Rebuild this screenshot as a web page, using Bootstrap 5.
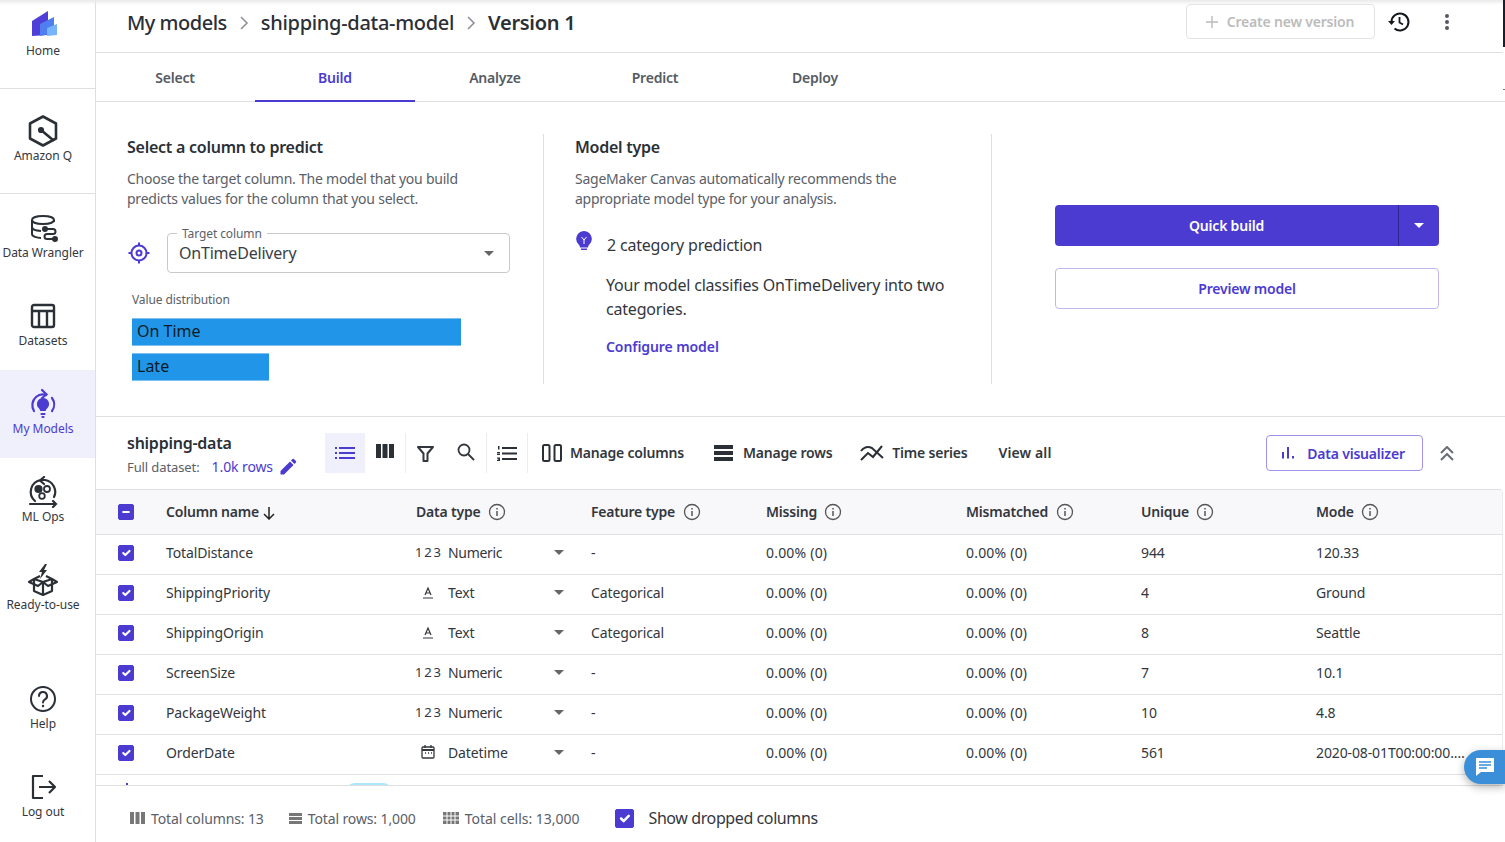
<!DOCTYPE html>
<html lang="en">
<head>
<meta charset="utf-8">
<title>Build</title>
<link href="https://cdn.jsdelivr.net/npm/bootstrap@5.3.0/dist/css/bootstrap.min.css" rel="stylesheet">
<style>
:root{--pur:#4b3bd1;--ink:#2b2f36;--gr:#5a6068;--ln:#dfdfdf}
html,body{height:842px;overflow:hidden}
body{font-family:"Noto Sans","Liberation Sans",sans-serif;color:var(--ink);background:#fff;font-size:14px}
.shell{height:842px;width:1505px;position:relative;overflow:hidden}
.topshade{position:absolute;left:0;top:0;right:0;height:5px;background:linear-gradient(#e9e9e9,#fff0);z-index:2}
.edgebar{position:absolute;right:0;top:0;width:2px;height:47px;background:#16202c;z-index:3}
.edgetick{position:absolute;right:0;top:89px;width:2px;height:1px;background:#777;z-index:3}
.rail{width:96px;flex:none;border-right:1px solid var(--ln);height:842px}
.rail-item{height:88px;padding:18px 9px 0 0;font-size:12px;line-height:16px;color:#33373d;white-space:nowrap;letter-spacing:-.05px}
.rail-item svg{width:32px;height:32px;display:block;margin-bottom:0}
.rail-item span{display:block;margin-top:1px}
.ri-home{height:89px;padding-top:10px;border-bottom:1px solid var(--ln)}
.ri-home svg{height:28px;margin-bottom:4px}
.ri-q{height:105px;padding-top:26px;border-bottom:1px solid var(--ln)}
.ri-low{padding-top:17px}
.ri-act{background:#f0effc;color:var(--pur)}
.crumbs{height:53px;border-bottom:1px solid var(--ln);padding:0 54px 0 31px;margin-right:2px;flex:none}
.crumbs .cr{font-size:20px;font-weight:500;line-height:24px;letter-spacing:-.3px;margin-top:-6px}
.crumbs .cr-a{letter-spacing:-.5px}
.crumbs .cr-b{font-weight:600}
.crumbs svg.sep{margin:-6px 12px 0}
.newver{width:189px;height:35px;border:1px solid #e3e3e3;border-radius:4px;color:#bcbcbc;font-weight:600;font-size:14px;margin-top:-9px;background:#fff;padding:0 2px 0 0;letter-spacing:-.2px}
.hist{margin:-8px 0 0 12px;flex:none}
.kebab{margin:-8px 0 0 34px;flex:none}
.tabrow{height:49px;border-bottom:1px solid var(--ln);flex:none;margin-left:-1px}
.tabi{width:160px;text-align:center;line-height:50px;height:49px;font-weight:600;color:#555b63;font-size:14px;letter-spacing:-.2px}
.tabi-on{color:var(--pur);border-bottom:2px solid var(--pur)}
.panel{height:315px;border-bottom:1px solid var(--ln);padding:32px 0;flex:none;margin-left:-1px}
.pcol{width:448px;padding:0 32px 0 31px;height:250px;flex:none;border-right:1px solid var(--ln)}
.pcol-first{width:449px;padding:0 33px 0 32px}
.pcol-last{border-right:0;padding:71px 0 0 63px;width:448px}
.ptitle{font-size:16px;font-weight:600;line-height:26px;margin:0 0 9px;letter-spacing:-.25px}
.pdesc{font-size:14px;line-height:20px;color:var(--gr);margin:0;letter-spacing:-.24px}
.tgt{height:40px;border:1px solid #c9c9c9;border-radius:4px;width:344px;padding:0 15px 0 11px;font-size:16px;position:relative;letter-spacing:-.2px;color:#3a3e44}
.tgt-lbl{position:absolute;left:9px;top:-7px;background:#fff;font-size:12px;line-height:14px;padding:0 5px;color:var(--gr);letter-spacing:-.1px}
.vd{font-size:12px;line-height:16px;color:var(--gr);margin:19px 0 10px 5px;letter-spacing:-.1px}
.dbar{height:28px;background:#2196e8;border-top:1px solid #7cc1f0;border-bottom:1px solid #7cc1f0;margin:0 0 7px 5px;padding-left:5px;font-size:16px;line-height:25px;color:#0c1a28}
.tx16{font-size:16px;line-height:24px;color:#33373d;letter-spacing:-.2px}
.cfg{color:var(--pur);font-weight:600;font-size:14px;letter-spacing:-.08px}
.qb{width:384px;height:41px;background:var(--pur);border-radius:4px;color:#fff;font-weight:600;font-size:14px;letter-spacing:-.2px}
.qb-m{flex:1;text-align:center;line-height:41px;border-right:1px solid #2f2492}
.qb-c{width:40px}
.pv{width:384px;height:41px;border:1px solid #bdb8ee;border-radius:4px;color:var(--pur);font-weight:600;background:#fff;margin-top:22px;padding:0;font-size:14px;letter-spacing:-.2px}
.tools{height:72px;padding:16px 0 0 31px;flex:none;position:relative}
.dsn{width:198px;flex:none;margin-top:-1px}
.dsn b{display:block;font-size:16px;font-weight:600;line-height:22px;letter-spacing:-.25px}
.dsn div{font-size:13px;color:var(--gr);line-height:20px;margin-top:3px;letter-spacing:-.1px}
.dsn a{color:var(--pur);text-decoration:none;font-size:14px;margin-left:12px}
.tbox{width:40px;height:40px;flex:none}
.tbox-on{background:#f0effc}
.vsep{width:1px;height:40px;background:#ececec;flex:none}
.tact{font-weight:600;font-size:14px;letter-spacing:-.2px;white-space:nowrap;height:40px;color:#33373d}
.dviz{width:157px;height:36px;border:1px solid #9d93ec;border-radius:4px;color:var(--pur);font-weight:600;background:#fff;font-size:14px;padding:0 2px 0 0;letter-spacing:-.2px}
.twrap{height:297px;margin-right:2px;overflow:hidden;border-top:1px solid var(--ln);border-bottom:1px solid var(--ln);border-right:1px solid #ececec;border-top-right-radius:4px;flex:none}
.dtb{table-layout:fixed;width:1407px;margin:0;--bs-table-border-color:#e1e1e1;--bs-table-color:#33373d}
.dtb th,.dtb td{padding:0;vertical-align:middle;height:40px;font-size:14px;white-space:nowrap;letter-spacing:-.12px}
.dtb td{padding-bottom:3px}
.dtb thead th{height:44px;background:#f8f8fa;font-weight:600;--bs-table-bg:#f8f8fa;letter-spacing:-.2px}
.dtb td.nm{letter-spacing:.2px}
.ck{padding-left:22px!important}
.form-check-input.box{width:16px;height:16px;margin:1px 0 0;border-radius:2px;background-color:var(--pur);border-color:var(--pur);display:block}
.form-check-input.box[type=checkbox]:indeterminate{background-color:var(--pur);border-color:var(--pur)}
.dty{width:26px;margin-left:-1px;text-align:center;display:inline-block;font-size:13px;letter-spacing:1.8px;margin-right:7px;white-space:nowrap}
.dty svg{vertical-align:-2px}
.dtc{display:flex;align-items:center;padding-right:27px}
.dtc i{font-style:normal;flex:1}
.car{width:0;height:0;border-left:5px solid transparent;border-right:5px solid transparent;border-top:5px solid #666}
.ell{overflow:hidden;text-overflow:ellipsis;width:150px;display:block}
.ipeek{display:block;width:48px;height:20px;border-radius:10px;background:#a9e8fb;margin-left:179px}
.dotpeek{display:block;width:2px;height:2px;background:var(--pur);margin:8px 0 0 8px}
.foot{height:56px;padding:8px 0 0 34px;font-size:14px;color:var(--gr);letter-spacing:-.12px;flex:none}
.foot svg{margin-right:6px}
.foot-it{margin-right:25px}
.chatb{position:absolute;right:0;top:750px;width:41px;height:34px;background:#3a8fd8;border-radius:17px 0 0 17px;box-shadow:0 3px 8px rgba(0,0,0,.3);z-index:4}
.form-check-input.fbox{width:19px;height:19px;margin:0 15px 0 0;border-radius:2px;background-color:var(--pur);border-color:var(--pur)}
</style>
</head>
<body>
<div class="shell d-flex">
<div class="topshade"></div><div class="edgebar"></div><div class="edgetick"></div>

<nav class="rail d-flex flex-column">
  <div class="rail-item ri-home d-flex flex-column align-items-center">
    <svg viewBox="0 0 32 28"><path d="M5 11 21 1v24L5 26z" fill="#4f3fd6"/><path d="M13 14l14-7v16l-14 3z" fill="#4d7ff0"/><path d="M20 18l10-4v11l-10 1z" fill="#78b4fb"/></svg>
    <span>Home</span></div>
  <div class="rail-item ri-q d-flex flex-column align-items-center">
    <svg viewBox="0 0 32 32" fill="none" stroke="#2b2f36" stroke-width="2.600" stroke-linejoin="round" stroke-linecap="round"><path d="M16 1.500 29 8.500v15L16 30.500 3 23.500v-15z"/><path d="M14 15l12 10"/><circle cx="14" cy="15" r="1.800" fill="#2b2f36"/></svg>
    <span>Amazon Q</span></div>
  <div class="rail-item d-flex flex-column align-items-center">
    <svg viewBox="0 0 32 32" fill="none" stroke="#2b2f36" stroke-width="2"><path d="M27 10V8c0-2.500-5-4-11-4S5 5.500 5 8v14c0 2.500 5 4 9 4"/><path d="M5 8c0 2.500 5 4 11 4s11-1.500 11-4M5 15c0 2.300 4.500 3.700 9 4"/><path d="M18 17h8a2.500 2.500 0 0 1 0 5h-6a2.500 2.500 0 0 0 0 5h9"/><circle cx="18" cy="17" r="2" fill="#2b2f36"/><circle cx="28" cy="27" r="2" fill="#2b2f36"/></svg>
    <span>Data Wrangler</span></div>
  <div class="rail-item d-flex flex-column align-items-center">
    <svg viewBox="0 0 32 32" fill="none" stroke="#2b2f36" stroke-width="2.400"><rect x="5" y="5" width="22" height="22" rx="2"/><path d="M5 11h22M12 11v16M20 11v16"/></svg>
    <span>Datasets</span></div>
  <div class="rail-item ri-act d-flex flex-column align-items-center">
    <svg viewBox="0 0 32 32" fill="none" stroke="#4b3bd1" stroke-width="2.200" stroke-linecap="round"><path d="M7 23a11 11 0 0 1 2-14c3-2.500 7-3 10-2M25 10a11 11 0 0 1 0 13"/><path d="M15 2l4.500 4.500L15 10"/><path fill="#4b3bd1" stroke="none" d="M16 10a6 6 0 0 1 4 10.500c-1 1-1.200 2-1.200 2.500h-5.600c0-.5-.2-1.500-1.200-2.500A6 6 0 0 1 16 10z"/><path d="M14.500 26h3M15.500 29h1"/></svg>
    <span>My Models</span></div>
  <div class="rail-item d-flex flex-column align-items-center">
    <svg viewBox="0 0 32 32" fill="none" stroke="#2b2f36" stroke-width="2.200" stroke-linecap="round"><path d="M8 25A12 12 0 0 1 14 4h4a12 12 0 0 1 9 17"/><path d="M17 1l-4 3.500 4 3.500"/><path d="M3 28h26M26 25l3 3-3 3"/><circle cx="11.500" cy="13" r="3" fill="#2b2f36"/><circle cx="20" cy="13" r="3" stroke-width="1.800"/><circle cx="15" cy="20" r="2.800" stroke-width="1.800"/></svg>
    <span>ML Ops</span></div>
  <div class="rail-item d-flex flex-column align-items-center">
    <svg viewBox="0 0 32 32" fill="none" stroke="#2b2f36" stroke-width="2.200" stroke-linejoin="round"><path d="M7 15v12l9 4 9-4V15M16 18v13"/><path d="M16 18 7 15l-5 3 9 4zM16 18l9-3 5 3-9 4zM7 15l6-3M25 15l-6-3"/><path fill="#2b2f36" stroke="none" d="M18 0l-6 8h3l-2 7 7-9h-3l3-6z"/></svg>
    <span>Ready-to-use</span></div>
  <div class="flex-grow-1"></div>
  <div class="rail-item ri-low d-flex flex-column align-items-center">
    <svg viewBox="0 0 32 32" fill="none" stroke="#2b2f36" stroke-width="2"><circle cx="16" cy="16" r="12"/><path d="M12 13a4 4 0 1 1 6 3.400c-1.500 1-2 1.700-2 3.100" stroke-linecap="round"/><circle cx="16" cy="23" r="1.200" fill="#2b2f36" stroke="none"/></svg>
    <span>Help</span></div>
  <div class="rail-item ri-low d-flex flex-column align-items-center">
    <svg viewBox="0 0 32 32" fill="none" stroke="#2b2f36" stroke-width="2.200" stroke-linejoin="round"><path d="M16 5H6v22h10"/><path d="M12 16h16M22 10l6 6-6 6"/></svg>
    <span>Log out</span></div>
</nav>

<main class="flex-grow-1 d-flex flex-column" style="min-width:0">
  <header class="crumbs d-flex align-items-center">
    <span class="cr cr-a">My models</span>
    <svg class="sep" width="10" height="16" viewBox="0 0 10 16" fill="none" stroke="#8a8f96" stroke-width="1.500"><path d="M2 2l6 6-6 6"/></svg>
    <span class="cr">shipping-data-model</span>
    <svg class="sep" width="10" height="16" viewBox="0 0 10 16" fill="none" stroke="#8a8f96" stroke-width="1.500"><path d="M2 2l6 6-6 6"/></svg>
    <span class="cr cr-b">Version 1</span>
    <button class="newver btn d-flex align-items-center justify-content-center ms-auto" type="button" disabled style="opacity:1;border-color:#e3e3e3;color:#bcbcbc">
      <svg width="14" height="14" viewBox="0 0 14 14" stroke="#bcbcbc" stroke-width="1.400" class="me-2"><path d="M7 1v12M1 7h12"/></svg>Create new version</button>
    <svg class="hist" width="24" height="24" viewBox="0 0 24 24" fill="none" stroke="#15181c" stroke-width="2"><path d="M4.500 12a8.500 8.500 0 1 1 3 6.500"/><path d="M12.500 7v5.500l3.500 2" stroke-width="1.800"/><path d="M1 11h7l-3.500 4z" fill="#15181c" stroke="none"/></svg>
    <svg class="kebab" width="4" height="16" viewBox="0 0 4 16" fill="#55595f"><circle cx="2" cy="2" r="2"/><circle cx="2" cy="8" r="2"/><circle cx="2" cy="14" r="2"/></svg>
  </header>

  <div class="tabrow d-flex">
    <div class="tabi">Select</div><div class="tabi tabi-on">Build</div><div class="tabi">Analyze</div><div class="tabi">Predict</div><div class="tabi">Deploy</div>
  </div>

  <section class="panel d-flex">
    <div class="pcol pcol-first">
      <h2 class="ptitle">Select a column to predict</h2>
      <p class="pdesc">Choose the target column. The model that you build predicts values for the column that you select.</p>
      <div class="d-flex align-items-center" style="margin-top:24px">
        <svg width="24" height="24" viewBox="0 0 24 24" fill="none" stroke="#4b3bd1" stroke-width="2" style="margin-right:16px;flex:none"><circle cx="12" cy="12" r="7.500"/><circle cx="12" cy="12" r="2.500"/><path d="M12 1.500v3M12 19.500v3M1.500 12h3M19.500 12h3"/></svg>
        <div class="tgt d-flex align-items-center justify-content-between"><span class="tgt-lbl">Target column</span>OnTimeDelivery<span class="car"></span></div>
      </div>
      <div class="vd">Value distribution</div>
      <div class="dbar" style="width:329px">On Time</div>
      <div class="dbar" style="width:137px">Late</div>
    </div>
    <div class="pcol">
      <h2 class="ptitle">Model type</h2>
      <p class="pdesc">SageMaker Canvas automatically recommends the appropriate model type for your analysis.</p>
      <div class="d-flex tx16" style="margin-top:24px">
        <svg width="16" height="20" viewBox="0 0 16 20" style="margin:-2px 15px 0 1px;flex:none"><path fill="#4b3bd1" d="M8 0a8 8 0 0 1 5 14c-.6.6-1 1.500-1 2.500H4c0-1-.4-1.900-1-2.500A8 8 0 0 1 8 0z"/><path fill="#4b3bd1" d="M5 17.500h6V19H5z"/><path d="M5.500 6 8 9l2.500-3M8 9v4" stroke="#fff" fill="none"/></svg>
        <span>2 category prediction</span>
      </div>
      <div class="tx16" style="margin:16px 0 0 31px">Your model classifies OnTimeDelivery into two categories.</div>
      <div class="cfg" style="margin:15px 0 0 31px">Configure model</div>
    </div>
    <div class="pcol pcol-last">
      <div class="qb d-flex">
        <div class="qb-m">Quick build</div>
        <div class="qb-c d-flex align-items-center justify-content-center"><span class="car" style="border-top-color:#fff"></span></div>
      </div>
      <button class="pv btn d-block" type="button" style="color:#4b3bd1;border-color:#bdb8ee">Preview model</button>
    </div>
  </section>

  <section class="tools d-flex">
    <div class="dsn"><b>shipping-data</b><div class="d-flex align-items-center">Full dataset: <a href="#">1.0k rows</a>
      <svg style="margin-left:6px" width="18" height="18" viewBox="0 0 18 18" fill="#4b3bd1"><path d="M1.500 13v3.500H5L14.500 7 11 3.500zM15.500 6 12 2.500l1.500-1.500a1 1 0 0 1 1.400 0l2 2a1 1 0 0 1 0 1.400z"/></svg></div></div>
    <div class="tbox tbox-on d-flex align-items-center justify-content-center"><svg width="20" height="12" viewBox="0 0 20 12" fill="#4b3bd1"><path d="M0 0h2v2H0zM4 0h16v2H4zM0 5h2v2H0zM4 5h16v2H4zM0 10h2v2H0zM4 10h16v2H4z"/></svg></div>
    <div class="tbox d-flex align-items-center justify-content-center"><svg width="18" height="14" viewBox="0 0 18 14" fill="#2b2f36" style="margin-top:-5px"><path d="M0 0h5v14H0zM6.500 0h5v14h-5zM13 0h5v14h-5z"/></svg></div>
    <div class="vsep"></div>
    <div class="tbox d-flex align-items-center justify-content-center"><svg width="17" height="17" viewBox="0 0 17 17" fill="none" stroke="#33373d" stroke-width="2" style="margin-left:-2px"><path d="M1 2h15l-5.500 6.500V16h-4V8.500z" stroke-linejoin="round"/></svg></div>
    <div class="tbox d-flex align-items-center justify-content-center"><svg width="18" height="18" viewBox="0 0 18 18" fill="none" stroke="#33373d" stroke-width="1.800" style="margin-top:-2px"><circle cx="7" cy="7" r="5.500"/><path d="M11 11l6 6"/></svg></div>
    <div class="vsep"></div>
    <div class="tbox d-flex align-items-center justify-content-center"><svg width="20" height="15" viewBox="0 0 20 15" fill="#2b2f36"><path d="M5 1h15v2H5zM5 6.500h15v2H5zM5 12h15v2H5zM1 0h1.500v3.500H1zM0 6h3v1H1.500v.5H3V9H0V7.500h1.500V7H0zM0 11.500h3V15H0v-1h1.500v-.5H.5v-.8h1V12.500H0z"/></svg></div>
    <div class="vsep"></div>
    <div class="tact d-flex align-items-center" style="margin-left:14px"><svg width="20" height="18" viewBox="0 0 20 18" fill="none" stroke="#2b2f36" stroke-width="2" style="margin-right:8px"><rect x="1" y="1" width="6.500" height="16" rx="1.500"/><rect x="12.500" y="1" width="6.500" height="16" rx="1.500"/></svg><span style="margin-top:-2px">Manage columns</span></div>
    <div class="tact d-flex align-items-center" style="margin-left:30px"><svg width="19" height="16" viewBox="0 0 19 16" fill="#2b2f36" style="margin-right:10px"><path d="M0 0h19v4H0zM0 6h19v4H0zM0 12h19v4H0z"/></svg><span style="margin-top:-2px">Manage rows</span></div>
    <div class="tact d-flex align-items-center" style="margin-left:28px"><svg width="24" height="16" viewBox="0 0 24 16" fill="none" stroke="#2b2f36" stroke-width="2" style="margin-right:8px"><path d="M1 15l7-7 5 4 9-11"/><path d="M1 6c3-4 7-5 11-3l11 10"/></svg><span style="margin-top:-2px">Time series</span></div>
    <div class="tact d-flex align-items-center" style="margin-left:31px;letter-spacing:.1px"><span style="margin-top:-2px">View all</span></div>
    <div class="flex-grow-1"></div>
    <button class="dviz btn d-flex align-items-center justify-content-center" type="button" style="color:#4b3bd1;border-color:#9d93ec;margin-top:2px"><svg width="12" height="12" viewBox="0 0 12 12" fill="#4b3bd1" style="margin-right:13px"><path d="M0 5h2v6.500H0zM5 0h2v11.500H5zM10 9h2v2.500h-2z"/></svg>Data visualizer</button>
    <svg width="14" height="16" viewBox="0 0 14 16" fill="none" stroke="#6a6e74" stroke-width="2" style="margin:13px 51px 0 17px;flex:none"><path d="M1 7l6-6 6 6M1 14l6-6 6 6"/></svg>
  </section>

  <div class="twrap">
    <table class="table dtb">
      <colgroup><col style="width:70px"><col style="width:250px"><col style="width:175px"><col style="width:175px"><col style="width:200px"><col style="width:175px"><col style="width:175px"><col style="width:187px"></colgroup>
      <thead><tr>
        <th class="ck"><input id="allck" class="form-check-input box" type="checkbox" aria-label="All"></th>
        <th>Column name <svg width="12" height="14" viewBox="0 0 12 14" fill="none" stroke="#222" stroke-width="1.500" style="vertical-align:-3px;margin-left:1px"><path d="M6 1v12M1 8l5 5 5-5"/></svg></th>
        <th>Data type <svg class="ms-1" width="18" height="18" viewBox="0 0 18 18" fill="none" stroke="#555" style="vertical-align:-4px"><circle cx="9" cy="9" r="7.500" stroke-width="1.300"/><path d="M9 8v5M9 5v1.500" stroke-width="1.500"/></svg></th>
        <th>Feature type <svg class="ms-1" width="18" height="18" viewBox="0 0 18 18" fill="none" stroke="#555" style="vertical-align:-4px"><circle cx="9" cy="9" r="7.500" stroke-width="1.300"/><path d="M9 8v5M9 5v1.500" stroke-width="1.500"/></svg></th>
        <th>Missing <svg class="ms-1" width="18" height="18" viewBox="0 0 18 18" fill="none" stroke="#555" style="vertical-align:-4px"><circle cx="9" cy="9" r="7.500" stroke-width="1.300"/><path d="M9 8v5M9 5v1.500" stroke-width="1.500"/></svg></th>
        <th>Mismatched <svg class="ms-1" width="18" height="18" viewBox="0 0 18 18" fill="none" stroke="#555" style="vertical-align:-4px"><circle cx="9" cy="9" r="7.500" stroke-width="1.300"/><path d="M9 8v5M9 5v1.500" stroke-width="1.500"/></svg></th>
        <th>Unique <svg class="ms-1" width="18" height="18" viewBox="0 0 18 18" fill="none" stroke="#555" style="vertical-align:-4px"><circle cx="9" cy="9" r="7.500" stroke-width="1.300"/><path d="M9 8v5M9 5v1.500" stroke-width="1.500"/></svg></th>
        <th>Mode <svg class="ms-1" width="18" height="18" viewBox="0 0 18 18" fill="none" stroke="#555" style="vertical-align:-4px"><circle cx="9" cy="9" r="7.500" stroke-width="1.300"/><path d="M9 8v5M9 5v1.500" stroke-width="1.500"/></svg></th>
      </tr></thead>
      <tbody id="rows"><tr>
        <td class="ck"><input class="form-check-input box" type="checkbox" checked aria-label="TotalDistance"></td><td>TotalDistance</td>
        <td><div class="dtc"><span class="dty">123</span><i style="letter-spacing:-.3px">Numeric</i><span class="car"></span></div></td><td>-</td><td class="nm">0.00% (0)</td><td class="nm">0.00% (0)</td><td>944</td><td>120.33</td></tr>
      <tr>
        <td class="ck"><input class="form-check-input box" type="checkbox" checked aria-label="ShippingPriority"></td><td>ShippingPriority</td>
        <td><div class="dtc"><span class="dty"><svg width="12" height="12" viewBox="0 0 12 12" fill="none" stroke="#33373d" stroke-width="1.200"><path d="M3 8l3-7 3 7M4 6h4M1 11h10"/></svg></span><i>Text</i><span class="car"></span></div></td><td>Categorical</td><td class="nm">0.00% (0)</td><td class="nm">0.00% (0)</td><td>4</td><td>Ground</td></tr>
      <tr>
        <td class="ck"><input class="form-check-input box" type="checkbox" checked aria-label="ShippingOrigin"></td><td>ShippingOrigin</td>
        <td><div class="dtc"><span class="dty"><svg width="12" height="12" viewBox="0 0 12 12" fill="none" stroke="#33373d" stroke-width="1.200"><path d="M3 8l3-7 3 7M4 6h4M1 11h10"/></svg></span><i>Text</i><span class="car"></span></div></td><td>Categorical</td><td class="nm">0.00% (0)</td><td class="nm">0.00% (0)</td><td>8</td><td>Seattle</td></tr>
      <tr>
        <td class="ck"><input class="form-check-input box" type="checkbox" checked aria-label="ScreenSize"></td><td>ScreenSize</td>
        <td><div class="dtc"><span class="dty">123</span><i style="letter-spacing:-.3px">Numeric</i><span class="car"></span></div></td><td>-</td><td class="nm">0.00% (0)</td><td class="nm">0.00% (0)</td><td>7</td><td>10.1</td></tr>
      <tr>
        <td class="ck"><input class="form-check-input box" type="checkbox" checked aria-label="PackageWeight"></td><td>PackageWeight</td>
        <td><div class="dtc"><span class="dty">123</span><i style="letter-spacing:-.3px">Numeric</i><span class="car"></span></div></td><td>-</td><td class="nm">0.00% (0)</td><td class="nm">0.00% (0)</td><td>10</td><td>4.8</td></tr>
      <tr>
        <td class="ck"><input class="form-check-input box" type="checkbox" checked aria-label="OrderDate"></td><td>OrderDate</td>
        <td><div class="dtc"><span class="dty"><svg width="14" height="14" viewBox="0 0 14 14" fill="none" stroke="#33373d" stroke-width="1.300"><rect x="1" y="2" width="12" height="11" rx="1"/><path d="M1 5h12" stroke-width="2"/><path d="M4 0v3M10 0v3M4 8h1M7 8h1M10 8h1"/></svg></span><i>Datetime</i><span class="car"></span></div></td><td>-</td><td class="nm">0.00% (0)</td><td class="nm">0.00% (0)</td><td>561</td><td><span class="ell">2020-08-01T00:00:00.000</span></td></tr>
      <tr>
        <td class="ck" style="vertical-align:top"><span class="dotpeek"></span></td><td colspan="2" style="vertical-align:top;padding-top:8px"><span class="ipeek"></span></td><td colspan="5"></td></tr>
      </tbody>
    </table>
  </div>

  <footer class="foot d-flex align-items-center">
    <span class="foot-it d-flex align-items-center"><svg width="15" height="12" viewBox="0 0 15 12" fill="#777"><path d="M0 0h4v12H0zM5.500 0h4v12h-4zM11 0h4v12h-4z"/></svg>Total columns: 13</span>
    <span class="foot-it d-flex align-items-center" style="margin-right:27px"><svg width="13" height="11" viewBox="0 0 13 11" fill="#777"><path d="M0 0h13v3H0zM0 4h13v3H0zM0 8h13v3H0z"/></svg>Total rows: 1,000</span>
    <span class="foot-it d-flex align-items-center" style="margin-right:35px;letter-spacing:-.02px"><svg width="16" height="12" viewBox="0 0 16 12" fill="#777"><path d="M0 0h16v12H0z"/><path d="M4 0v12M8 0v12M12 0v12M0 4h16M0 8h16" stroke="#fff"/></svg>Total cells: 13,000</span>
    <input class="form-check-input fbox" type="checkbox" checked aria-label="Show dropped columns">
    <span style="font-size:16px;color:#33373d;letter-spacing:-.4px">Show dropped columns</span>
  </footer>
</main>

<div class="chatb d-flex align-items-center justify-content-center"><svg width="20" height="20" viewBox="0 0 20 20"><path fill="#fff" d="M1 1h18v14H6l-5 4z"/><path d="M4 5h12M4 8h12M4 11h8" stroke="#3a8fd8" stroke-width="1.500"/></svg></div>
</div>
<script src="https://cdn.jsdelivr.net/npm/bootstrap@5.3.0/dist/js/bootstrap.bundle.min.js"></script>
<script>document.getElementById('allck').indeterminate=true;</script>
</body>
</html>
